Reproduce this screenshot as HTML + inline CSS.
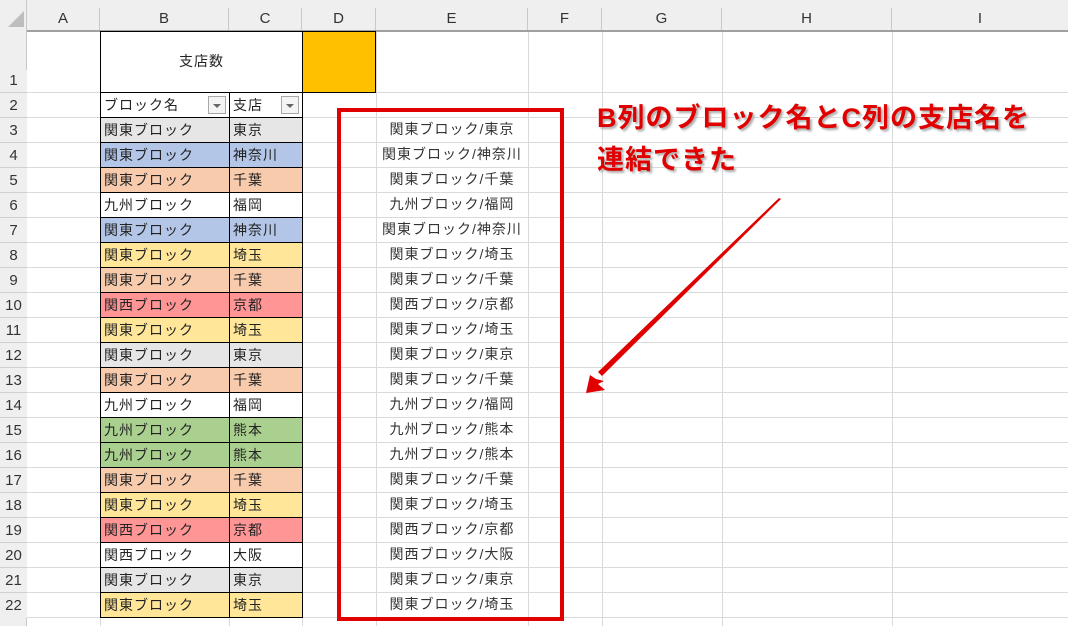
<!DOCTYPE html>
<html><head><meta charset="utf-8"><style>
body{margin:0;width:1068px;height:626px;overflow:hidden;background:#fff;font-family:"Liberation Sans","Noto Sans CJK JP",sans-serif;position:relative}
.a{position:absolute;box-sizing:border-box}
.hd{background:#efefef;color:#333;font-size:15px;text-align:center}
.vl{position:absolute;top:32px;bottom:0;width:1px;background:#dadada}
.hl{position:absolute;left:27px;right:0;height:1px;background:#dadada}
.c{position:absolute;font-size:14px;line-height:24px;color:#222;padding-left:3px;box-sizing:border-box;border:1px solid #000;letter-spacing:1px;white-space:nowrap;overflow:hidden}
.e{position:absolute;left:376px;width:152px;text-align:center;font-size:14px;line-height:25px;color:#333;letter-spacing:1px;white-space:nowrap}
.rn{position:absolute;left:0;width:27px;text-align:center;font-size:15px;color:#333;background:#efefef}
</style></head><body>
<div class="a hd" style="left:0;top:0;width:1068px;height:32px;border-bottom:2px solid #a0a0a0"></div>
<div class="a" style="left:0;top:0;width:27px;height:32px;background:#efefef;border-right:1px solid #c8c8c8"></div>
<svg class="a" style="left:8px;top:11px" width="17" height="17"><polygon points="16,0 16,16 0,16" fill="#bdbdbd"/></svg>
<div class="a hd" style="left:27px;top:8px;width:73px;line-height:22px;border-right:1px solid #c8c8c8">A</div>
<div class="a hd" style="left:100px;top:8px;width:129px;line-height:22px;border-right:1px solid #c8c8c8">B</div>
<div class="a hd" style="left:229px;top:8px;width:73px;line-height:22px;border-right:1px solid #c8c8c8">C</div>
<div class="a hd" style="left:302px;top:8px;width:74px;line-height:22px;border-right:1px solid #c8c8c8">D</div>
<div class="a hd" style="left:376px;top:8px;width:152px;line-height:22px;border-right:1px solid #c8c8c8">E</div>
<div class="a hd" style="left:528px;top:8px;width:74px;line-height:22px;border-right:1px solid #c8c8c8">F</div>
<div class="a hd" style="left:602px;top:8px;width:120px;line-height:22px;border-right:1px solid #c8c8c8">G</div>
<div class="a hd" style="left:722px;top:8px;width:170px;line-height:22px;border-right:1px solid #c8c8c8">H</div>
<div class="a hd" style="left:892px;top:8px;width:176px;line-height:22px">I</div>
<div class="a" style="left:0;top:32px;width:27px;height:594px;background:#efefef;border-right:1px solid #c8c8c8"></div>
<div class="vl" style="left:100px"></div><div class="vl" style="left:229px"></div><div class="vl" style="left:302px"></div><div class="vl" style="left:376px"></div><div class="vl" style="left:528px"></div><div class="vl" style="left:602px"></div><div class="vl" style="left:722px"></div><div class="vl" style="left:892px"></div>
<div id="g"></div>
<script>
var rows=[["関東ブロック","東京","#e7e6e6"],["関東ブロック","神奈川","#b4c6e7"],["関東ブロック","千葉","#f8cbad"],["九州ブロック","福岡","#fff"],["関東ブロック","神奈川","#b4c6e7"],["関東ブロック","埼玉","#ffe699"],["関東ブロック","千葉","#f8cbad"],["関西ブロック","京都","#ff9595"],["関東ブロック","埼玉","#ffe699"],["関東ブロック","東京","#e7e6e6"],["関東ブロック","千葉","#f8cbad"],["九州ブロック","福岡","#fff"],["九州ブロック","熊本","#a9d08e"],["九州ブロック","熊本","#a9d08e"],["関東ブロック","千葉","#f8cbad"],["関東ブロック","埼玉","#ffe699"],["関西ブロック","京都","#ff9595"],["関西ブロック","大阪","#fff"],["関東ブロック","東京","#e7e6e6"],["関東ブロック","埼玉","#ffe699"]];
var h='';
h+='<div class="hl" style="top:92px"></div>';
h+='<div class="rn" style="top:70px;line-height:22px">1</div>';
h+='<div class="rn" style="top:92px;line-height:25px;border-top:1px solid #d0d0d0">2</div>';
for(var i=0;i<21;i++){h+='<div class="hl" style="top:'+(117+i*25)+'px"></div>';}
for(var i=0;i<20;i++){var t=117+i*25,r=rows[i];
h+='<div class="rn" style="top:'+t+'px;line-height:25px;border-top:1px solid #d0d0d0">'+(i+3)+'</div>';
h+='<div class="c" style="left:100px;top:'+t+'px;width:130px;height:26px;background:'+r[2]+'">'+r[0]+'</div>';
h+='<div class="c" style="left:229px;top:'+t+'px;width:74px;height:26px;background:'+r[2]+'">'+r[1]+'</div>';
h+='<div class="e" style="top:'+t+'px">'+r[0]+'/'+r[1]+'</div>';}
document.getElementById('g').innerHTML=h;
</script>
<div class="a" style="left:100px;top:31px;width:203px;height:62px;background:#fff;border:1px solid #000;border-bottom:none;text-align:center;font-size:14px;line-height:58px;color:#222;letter-spacing:1px">支店数</div>
<div class="a" style="left:302px;top:31px;width:74px;height:62px;background:#ffc000;border:1px solid #000"></div>
<div class="c" style="left:100px;top:92px;width:130px;height:26px;background:#fff">ブロック名</div>
<div class="c" style="left:229px;top:92px;width:74px;height:26px;background:#fff">支店</div>
<div class="a" style="left:208px;top:96px;width:18px;height:18px;border:1px solid #a8a8a8;background:#f4f4f4"><div style="margin:7px auto 0;width:0;height:0;border-left:4px solid transparent;border-right:4px solid transparent;border-top:4px solid #666"></div></div>
<div class="a" style="left:281px;top:96px;width:18px;height:18px;border:1px solid #a8a8a8;background:#f4f4f4"><div style="margin:7px auto 0;width:0;height:0;border-left:4px solid transparent;border-right:4px solid transparent;border-top:4px solid #666"></div></div>
<div class="a" style="left:337px;top:108px;width:227px;height:513px;border:4px solid #e00000"></div>
<div class="a" style="left:597px;top:97px;font-size:27px;font-weight:bold;line-height:42px;letter-spacing:1px;color:#e00000;text-shadow:2px 2px 2px #aaa,-1px -1px 0 #fff;white-space:nowrap">B列のブロック名とC列の支店名を<br>連結できた</div>
<svg class="a" style="left:0;top:0" width="1068" height="626">
<polygon points="781,199 779,198 598,372 602,376" fill="#e00000"/>
<polygon points="586,393 590,375 596,379 604,381 598,384 605,390" fill="#e00000"/>
</svg>
</body></html>
